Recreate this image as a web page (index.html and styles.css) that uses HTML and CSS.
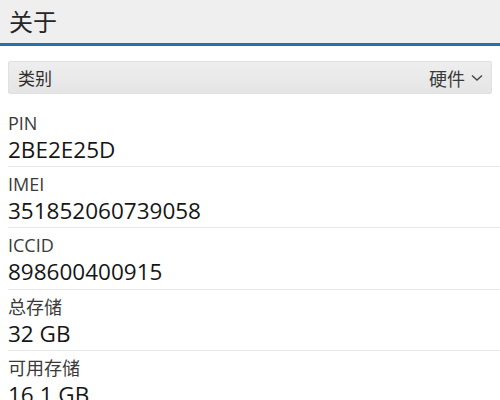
FILE: index.html
```html
<!DOCTYPE html>
<html lang="zh-CN">
<head>
    <meta charset="UTF-8">
    <meta name="viewport" content="width=device-width, initial-scale=1.0">
    <title>关于</title>
    <link rel="stylesheet" href="styles.css">
</head>
<body>
    <header class="title-bar">
        <h1>关于</h1>
    </header>

    <div class="category">
        <span class="category-label">类别</span>
        <span class="category-value">
            硬件
            <svg class="chevron" width="12" height="8" viewBox="0 0 12 8">
                <path d="M1 1.5 L6 6 L11 1.5" fill="none" stroke="#444" stroke-width="1.4"/>
            </svg>
        </span>
    </div>

    <ul class="info-list">
        <li class="info-item">
            <span class="info-label">PIN</span>
            <span class="info-value">2BE2E25D</span>
        </li>
        <li class="info-item">
            <span class="info-label">IMEI</span>
            <span class="info-value">351852060739058</span>
        </li>
        <li class="info-item">
            <span class="info-label">ICCID</span>
            <span class="info-value">898600400915</span>
        </li>
        <li class="info-item">
            <span class="info-label">总存储</span>
            <span class="info-value">32 GB</span>
        </li>
        <li class="info-item">
            <span class="info-label">可用存储</span>
            <span class="info-value">16.1 GB</span>
        </li>
    </ul>
</body>
</html>
```

FILE: styles.css
```css
* {
    margin: 0;
    padding: 0;
    box-sizing: border-box;
}

body {
    font-family: 'Open Sans', 'Noto Sans CJK SC', sans-serif;
    background: #ffffff;
    color: #1c1c1c;
    width: 500px;
    height: 400px;
    overflow: hidden;
}

.title-bar {
    height: 46px;
    background: #efefef;
    border-bottom: 3px solid #2471ad;
    display: flex;
    align-items: center;
    padding: 0 9px 2px;
}

.title-bar h1 {
    font-size: 24px;
    font-weight: 400;
    color: #262626;
}

.category {
    margin: 15px 8px 0;
    height: 33px;
    background: linear-gradient(#eeeeee, #e5e5e5);
    border: 1px solid #e0e0e0;
    border-radius: 2px;
    display: flex;
    align-items: center;
    justify-content: space-between;
    padding: 0 8px 0 9px;
    font-size: 17px;
    color: #2e2e2e;
}

.category-value {
    display: flex;
    align-items: center;
    gap: 6px;
    font-size: 18px;
    color: #3a3a3a;
}

.chevron {
    margin-top: 1px;
}

.info-list {
    list-style: none;
    margin: 12px 0 0 8px;
}

.info-item {
    display: flex;
    flex-direction: column;
    padding: 4px 0 2px;
    border-bottom: 1px solid #e6e6e6;
}

.info-item:nth-child(3n) {
    padding-bottom: 3px;
}

.info-label {
    font-size: 18px;
    line-height: 26px;
    color: #3a3a3a;
}

.info-value {
    font-size: 22.5px;
    line-height: 28px;
    color: #161616;
}
```
